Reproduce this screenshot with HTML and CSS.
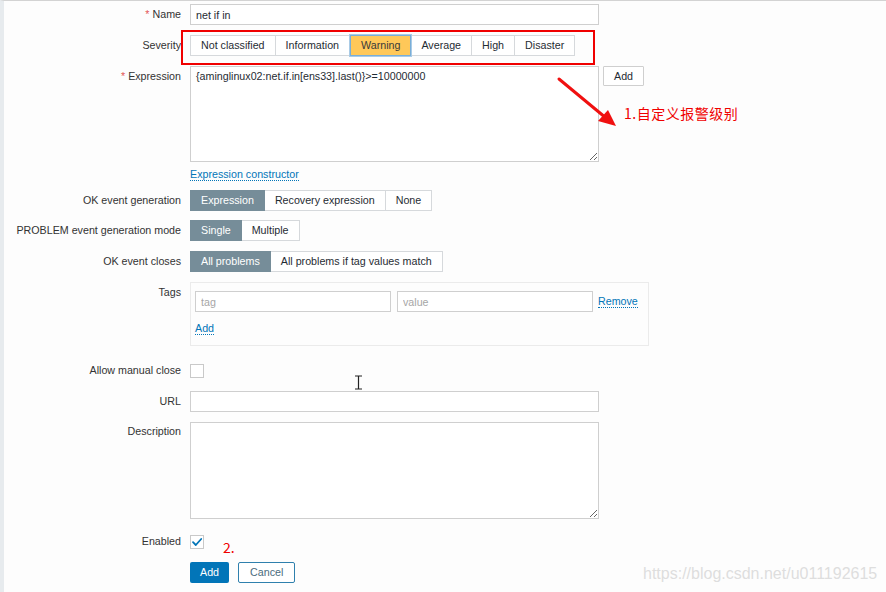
FILE: index.html
```html
<!DOCTYPE html>
<html lang="en">
<head>
<meta charset="utf-8">
<title>Trigger</title>
<link rel="stylesheet" href="styles.css">
</head>
<body>
<div class="page">
  <div class="form">
    <div class="row r-name">
      <div class="lbl"><span class="req">*</span> Name</div>
      <div class="fld"><input class="text w408" type="text" value="net if in"></div>
    </div>
    <div class="row r-sev">
      <div class="lbl">Severity</div>
      <div class="fld">
        <div class="radio">
          <span class="rb">Not classified</span><span class="rb">Information</span><span class="rb warn">Warning</span><span class="rb">Average</span><span class="rb">High</span><span class="rb">Disaster</span>
        </div>
      </div>
    </div>
    <div class="row r-expr">
      <div class="lbl"><span class="req">*</span> Expression</div>
      <div class="fld">
        <div class="expr-line">
          <textarea class="area expr">{aminglinux02:net.if.in[ens33].last()}&gt;=10000000</textarea>
          <span class="btn-grey">Add</span>
        </div>
        <div class="link-line"><a class="lnk">Expression constructor</a></div>
      </div>
    </div>
    <div class="row r-okgen">
      <div class="lbl">OK event generation</div>
      <div class="fld">
        <div class="radio">
          <span class="rb on">Expression</span><span class="rb">Recovery expression</span><span class="rb">None</span>
        </div>
      </div>
    </div>
    <div class="row r-mode">
      <div class="lbl">PROBLEM event generation mode</div>
      <div class="fld">
        <div class="radio">
          <span class="rb on">Single</span><span class="rb">Multiple</span>
        </div>
      </div>
    </div>
    <div class="row r-close">
      <div class="lbl">OK event closes</div>
      <div class="fld">
        <div class="radio">
          <span class="rb on">All problems</span><span class="rb">All problems if tag values match</span>
        </div>
      </div>
    </div>
    <div class="row r-tags">
      <div class="lbl lbl-top">Tags</div>
      <div class="fld">
        <div class="tagbox">
          <div class="tagrow">
            <input class="text w196" type="text" placeholder="tag">
            <input class="text w196" type="text" placeholder="value">
            <a class="lnk">Remove</a>
          </div>
          <div class="tagadd"><a class="lnk">Add</a></div>
        </div>
      </div>
    </div>
    <div class="row r-manual">
      <div class="lbl">Allow manual close</div>
      <div class="fld"><span class="chk"></span></div>
    </div>
    <div class="row r-url">
      <div class="lbl">URL</div>
      <div class="fld"><input class="text w408" type="text"></div>
    </div>
    <div class="row r-desc">
      <div class="lbl lbl-top">Description</div>
      <div class="fld"><textarea class="area desc"></textarea></div>
    </div>
    <div class="row r-enabled">
      <div class="lbl">Enabled</div>
      <div class="fld"><span class="chk checked"><svg width="12" height="12" viewBox="0 0 12 12"><path d="M2 6.2 L4.8 9 L10.2 3" fill="none" stroke="#0275b8" stroke-width="1.8" stroke-linecap="round" stroke-linejoin="round"/></svg></span></div>
    </div>
    <div class="row r-btns">
      <div class="lbl"></div>
      <div class="fld btns">
        <span class="btn-main">Add</span>
        <span class="btn-alt">Cancel</span>
      </div>
    </div>
  </div>

  <div class="mark-box"></div>
  <svg class="arrow" width="70" height="60" viewBox="0 0 70 60">
    <line x1="3" y1="3" x2="50" y2="42" stroke="#f01010" stroke-width="3" stroke-linecap="round"/>
    <polygon points="60,50 42,45 52,34" fill="#f01010"/>
  </svg>
  <div class="note note1">1.自定义报警级别</div>
  <div class="note note2">2.</div>
  <svg class="ibeam" width="9" height="15" viewBox="0 0 9 15">
    <path d="M1 1 H8 M4.5 1 V14 M1 14 H8" fill="none" stroke="#222" stroke-width="1.2"/>
  </svg>
  <div class="watermark">https://blog.csdn.net/u011192615</div>
</div>
</body>
</html>
```
FILE: styles.css
```css
html, body {
  margin: 0;
  padding: 0;
  background: #fdfdfd;
}
body {
  font-family: "Liberation Sans", Arial, "Noto Sans CJK SC", sans-serif;
  font-size: 10.7px;
  color: #1f2c33;
}
.page {
  position: relative;
  width: 882px;
  height: 591px;
  border-top: 1px solid #d3d3d3;
  border-left: 4px solid #e7ebee;
  overflow: hidden;
}
.form {
  display: flex;
  flex-direction: column;
  padding-top: 3px;
}
.row {
  display: flex;
  column-gap: 9px;
  align-items: flex-start;
}
.lbl {
  flex: none;
  width: 177px;
  text-align: right;
  line-height: 21px;
  color: #333;
  white-space: nowrap;
}
.lbl-top { line-height: 19px; }
.r-tags .lbl-top { line-height: 20px; }
.req { color: #e45959; }
.fld { flex: none; }

.text {
  box-sizing: border-box;
  height: 21px;
  border: 1px solid #cfcfcf;
  background: #fff;
  font: inherit;
  color: #1f2c33;
  padding: 0 5px;
  margin: 0;
  outline: none;
}
.text::placeholder { color: #a6a6a6; }
.w408 { width: 409px; }
.w196 { width: 196px; }

.r-sev { margin-top: 10px; }
.r-expr { margin-top: 10px; }
.r-okgen { margin-top: 9px; }
.r-mode { margin-top: 9px; }
.r-close { margin-top: 10px; }
.r-tags { margin-top: 10px; }
.r-manual { margin-top: 14px; }
.r-url { margin-top: 10px; }
.r-desc { margin-top: 10px; }
.r-enabled { margin-top: 12px; }
.r-btns { margin-top: 10px; }

.radio {
  display: flex;
  height: 21px;
}
.rb {
  box-sizing: border-box;
  height: 21px;
  line-height: 19px;
  padding: 0 10px;
  border: 1px solid #d6d9dc;
  border-left: none;
  background: #fff;
  color: #1f2c33;
  white-space: nowrap;
}
.rb:first-child { border-left: 1px solid #d6d9dc; }
.rb.on {
  background: #768d99;
  border-color: #768d99;
  color: #fff;
}
.rb.warn {
  background: #ffc859;
  border: 1px solid #79aed8;
  box-shadow: 0 0 0 1px #a9cbe6;
  color: #3a3a3a;
  position: relative;
}

.expr-line {
  display: flex;
  align-items: flex-start;
  column-gap: 4px;
}
.area {
  box-sizing: border-box;
  border: 1px solid #cfcfcf;
  background: #fff;
  font: inherit;
  color: #1f2c33;
  padding: 3px 5px;
  margin: 0;
  outline: none;
  display: block;
}
.expr { width: 409px; height: 96px; }
.desc { width: 409px; height: 97px; }
.btn-grey {
  box-sizing: border-box;
  height: 20px;
  line-height: 18px;
  padding: 0 10px;
  border: 1px solid #cfcfcf;
  background: #fff;
  color: #1f2c33;
  border-radius: 1px;
}
.link-line {
  margin-top: 5px;
  line-height: 14px;
}
.lnk {
  color: #0275b8;
  text-decoration: none;
  border-bottom: 1px dotted #0275b8;
  cursor: pointer;
}

.tagbox {
  box-sizing: border-box;
  width: 459px;
  height: 64px;
  border: 1px solid #ebebeb;
  background: #fdfdfd;
  padding: 8px 0 0 4px;
}
.tagrow {
  display: flex;
  align-items: center;
  column-gap: 6px;
}
.tagrow .lnk { margin-left: -1px; }
.tagadd {
  margin-top: 9px;
  line-height: 14px;
}

.chk {
  display: block;
  box-sizing: border-box;
  width: 14px;
  height: 14px;
  border: 1px solid #c9c9c9;
  background: #fff;
  margin-top: 4px;
  position: relative;
}
.chk svg {
  position: absolute;
  left: 0;
  top: 0;
}

.btns {
  display: flex;
  column-gap: 9px;
  margin-left: 0;
}
.btn-main {
  box-sizing: border-box;
  height: 21px;
  line-height: 21px;
  padding: 0 10px;
  background: #0275b8;
  color: #fff;
  border-radius: 2px;
}
.btn-alt {
  box-sizing: border-box;
  height: 21px;
  line-height: 19px;
  padding: 0 11px;
  border: 1px solid #2f80ad;
  background: #fff;
  color: #4a6b7d;
  border-radius: 2px;
}

.mark-box {
  position: absolute;
  left: 177px;
  top: 29px;
  width: 410px;
  height: 31px;
  border: 2px solid #f00000;
}
.arrow {
  position: absolute;
  left: 552px;
  top: 75px;
}
.note {
  position: absolute;
  color: #f00000;
  font-family: "Noto Sans CJK SC", "Liberation Sans", sans-serif;
  white-space: nowrap;
}
.note1 {
  left: 620px;
  top: 102px;
  font-size: 14px;
  line-height: 20px;
  letter-spacing: 0.5px;
}
.note2 {
  left: 219px;
  top: 537px;
  font-size: 14px;
  line-height: 18px;
}
.ibeam {
  position: absolute;
  left: 350px;
  top: 374px;
}
.watermark {
  position: absolute;
  left: 639px;
  top: 563px;
  font-size: 16px;
  line-height: 19px;
  color: #dedede;
  white-space: nowrap;
}
```
